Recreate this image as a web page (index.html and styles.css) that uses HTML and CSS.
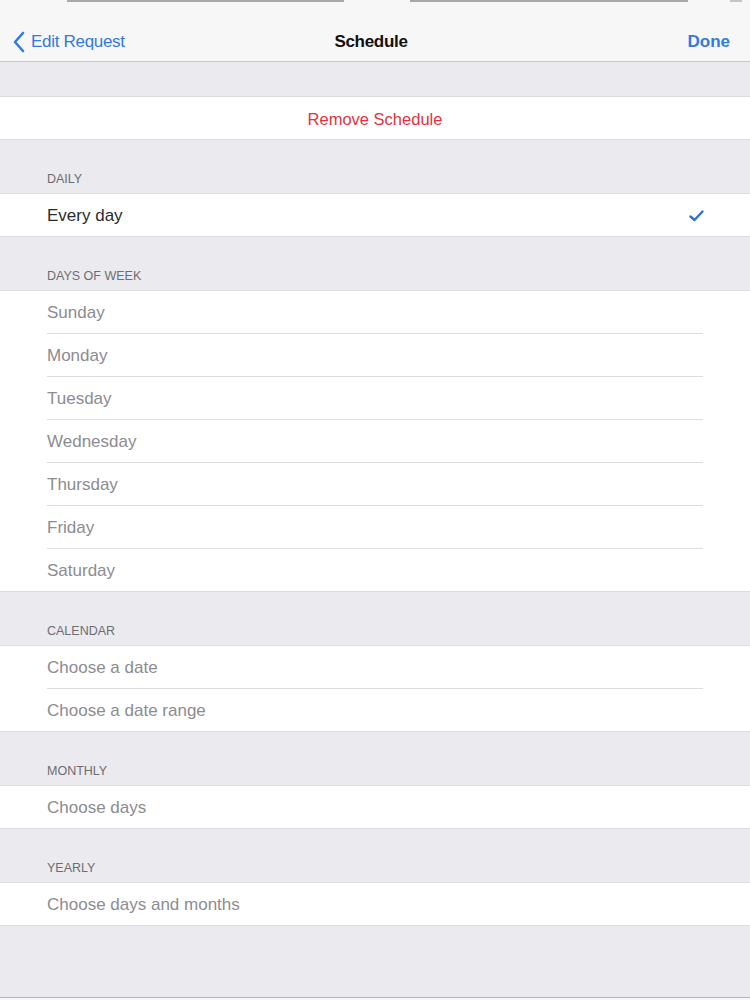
FILE: index.html
```html
<!DOCTYPE html>
<html lang="en">
<head>
    <meta charset="UTF-8">
    <meta name="viewport" content="width=device-width, initial-scale=1.0">
    <title>Schedule</title>
    <link rel="stylesheet" href="styles.css">
</head>
<body>
    <div class="topstrip">
        <span class="seg seg-a"></span>
        <span class="seg seg-b"></span>
        <span class="seg seg-c"></span>
    </div>
    <div class="navbar">
        <a class="nav-back" href="#">
            <svg width="13" height="22" viewBox="0 0 13 22"><path d="M11 2 L3 11 L11 20" fill="none" stroke="#2f7ae5" stroke-width="2.6" stroke-linecap="round" stroke-linejoin="round"/></svg>
            <span>Edit Request</span>
        </a>
        <div class="nav-title">Schedule</div>
        <a class="nav-done" href="#">Done</a>
    </div>

    <div class="spacer"></div>

    <div class="group">
        <div class="row row-center danger">Remove Schedule</div>
    </div>

    <div class="section-header">Daily</div>
    <div class="group">
        <div class="row selected">
            <span>Every day</span>
            <svg class="check" width="15" height="12" viewBox="0 0 15 12"><path d="M1.5 6.5 L5.5 10 L13.5 1.5" fill="none" stroke="#2f6fd6" stroke-width="2.4" stroke-linecap="round" stroke-linejoin="round"/></svg>
        </div>
    </div>

    <div class="section-header">Days of Week</div>
    <div class="group">
        <div class="row">Sunday</div>
        <div class="row">Monday</div>
        <div class="row">Tuesday</div>
        <div class="row">Wednesday</div>
        <div class="row">Thursday</div>
        <div class="row">Friday</div>
        <div class="row">Saturday</div>
    </div>

    <div class="section-header">Calendar</div>
    <div class="group">
        <div class="row">Choose a date</div>
        <div class="row">Choose a date range</div>
    </div>

    <div class="section-header">Monthly</div>
    <div class="group">
        <div class="row">Choose days</div>
    </div>

    <div class="section-header">Yearly</div>
    <div class="group">
        <div class="row">Choose days and months</div>
    </div>

    <div class="bottom-line"></div>
</body>
</html>
```

FILE: styles.css
```css
body {
    margin: 0;
    background-color: #ebeaef;
    font-family: "Liberation Sans", Arial, sans-serif;
    height: 1000px;
    position: relative;
    overflow: hidden;
}

.topstrip {
    height: 2px;
    background-color: #f7f7f7;
    display: flex;
}

.seg {
    height: 2px;
    background-color: #a9a9ad;
}

.seg-a {
    margin-left: 67px;
    width: 277px;
}

.seg-b {
    margin-left: 66px;
    width: 278px;
}

.seg-c {
    margin-left: 42px;
    width: 12px;
    background-color: #c4c4c8;
}

.navbar {
    height: 60px;
    box-sizing: border-box;
    padding: 20px 20px 0 12px;
    background-color: #f7f7f7;
    border-bottom: 1px solid #c9c9cd;
    display: grid;
    grid-template-columns: 1fr auto 1fr;
    align-items: center;
}

.navbar a {
    color: #2f7ae5;
    text-decoration: none;
    font-size: 17px;
}

.nav-back {
    display: flex;
    align-items: center;
    gap: 6px;
    letter-spacing: -0.3px;
}

.nav-title {
    font-size: 17px;
    font-weight: bold;
    color: #111;
    letter-spacing: -0.3px;
}

.nav-done {
    justify-self: end;
    font-weight: bold;
}

.spacer {
    height: 34px;
}

.group {
    background-color: #fff;
    border-top: 1px solid #dedde2;
    border-bottom: 1px solid #dedde2;
}

.row {
    height: 42px;
    box-sizing: border-box;
    padding-top: 2px;
    margin-left: 47px;
    padding-right: 47px;
    display: flex;
    align-items: center;
    justify-content: space-between;
    font-size: 17px;
    color: #8c8c91;
}

.row + .row {
    border-top: 1px solid #dddde0;
    height: 43px;
}

.row:has(+ .row),
.row + .row {
    margin-right: 47px;
    padding-right: 0;
}

.row-center {
    margin-left: 0;
    padding-right: 0;
    justify-content: center;
}

.danger {
    color: #e8303c;
    font-size: 16.5px;
}

.selected {
    color: #2b2b2e;
}

.check {
    margin-right: -1px;
}

.section-header {
    height: 53px;
    box-sizing: border-box;
    padding: 0 0 7px 47px;
    display: flex;
    align-items: flex-end;
    font-size: 12.5px;
    text-transform: uppercase;
    color: #6d6d72;
}

.bottom-line {
    position: absolute;
    left: 0;
    right: 0;
    top: 997px;
    height: 3px;
    border-top: 1px solid #b5b5b9;
    background-color: #f7f7f7;
}
```
